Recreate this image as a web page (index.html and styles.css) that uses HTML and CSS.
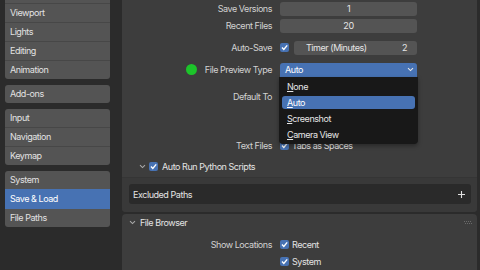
FILE: index.html
```html
<!DOCTYPE html>
<html lang="en">
<head>
    <meta charset="UTF-8">
    <title>Preferences - Save &amp; Load</title>
    <link rel="stylesheet" href="styles.css">
</head>
<body>
    <nav class="nav">
        <div class="group">
            <div class="nav-item">Interface</div>
            <div class="nav-item">Viewport</div>
            <div class="nav-item">Lights</div>
            <div class="nav-item">Editing</div>
            <div class="nav-item">Animation</div>
        </div>
        <div class="group">
            <div class="nav-item">Add-ons</div>
        </div>
        <div class="group">
            <div class="nav-item">Input</div>
            <div class="nav-item">Navigation</div>
            <div class="nav-item">Keymap</div>
        </div>
        <div class="group">
            <div class="nav-item">System</div>
            <div class="nav-item active">Save &amp; Load</div>
            <div class="nav-item">File Paths</div>
        </div>
    </nav>

    <main class="main">
        <section class="panel">
            <div class="row">
                <div class="label">Save Versions</div>
                <div class="ctrl"><div class="field">1</div></div>
            </div>
            <div class="row">
                <div class="label">Recent Files</div>
                <div class="ctrl"><div class="field">20</div></div>
            </div>
            <div class="row gap-m">
                <div class="label">Auto-Save</div>
                <div class="ctrl">
                    <span class="box"><svg viewBox="0 0 9 9"><path d="M2 4.6 L3.8 6.4 L7.2 2.4"/></svg></span>
                    <div class="field field-split"><span>Timer (Minutes)</span><span>2</span></div>
                </div>
            </div>
            <div class="row gap-m">
                <div class="label"><span class="dot"></span>File Preview Type</div>
                <div class="ctrl">
                    <div class="dropdown">
                        <span>Auto</span>
                        <svg class="chev" viewBox="0 0 7 5"><path d="M1 1.2 L3.5 3.6 L6 1.2"/></svg>
                        <div class="menu">
                            <div class="menu-item"><u>N</u>one</div>
                            <div class="menu-item selected"><u>A</u>uto</div>
                            <div class="menu-item"><u>S</u>creenshot</div>
                            <div class="menu-item"><u>C</u>amera View</div>
                        </div>
                    </div>
                </div>
            </div>
            <div class="row gap-l">
                <div class="label">Default To</div>
                <div class="ctrl">
                    <label class="check"><span class="box"><svg viewBox="0 0 9 9"><path d="M2 4.6 L3.8 6.4 L7.2 2.4"/></svg></span>Relative Paths</label>
                </div>
            </div>
            <div class="row">
                <div class="label"></div>
                <div class="ctrl">
                    <label class="check"><span class="box"><svg viewBox="0 0 9 9"><path d="M2 4.6 L3.8 6.4 L7.2 2.4"/></svg></span>Compress File</label>
                </div>
            </div>
            <div class="row gap-xl">
                <div class="label">Text Files</div>
                <div class="ctrl">
                    <label class="check"><span class="box"><svg viewBox="0 0 9 9"><path d="M2 4.6 L3.8 6.4 L7.2 2.4"/></svg></span>Tabs as Spaces</label>
                </div>
            </div>
            <div class="row row-toggle">
                <svg class="chev chev-dim" viewBox="0 0 7 5"><path d="M1 1.2 L3.5 3.6 L6 1.2"/></svg>
                <label class="check"><span class="box"><svg viewBox="0 0 9 9"><path d="M2 4.6 L3.8 6.4 L7.2 2.4"/></svg></span>Auto Run Python Scripts</label>
            </div>
            <div class="subpanel">
                <div class="subhead">
                    <span>Excluded Paths</span>
                    <svg class="plus" viewBox="0 0 7 7"><path d="M3.5 0 V7 M0 3.5 H7"/></svg>
                </div>
            </div>
        </section>

        <section class="panel panel-last">
            <div class="panel-head">
                <svg class="chev chev-dim" viewBox="0 0 7 5"><path d="M1 1.2 L3.5 3.6 L6 1.2"/></svg>
                <span class="panel-title">File Browser</span>
                <svg class="grip" viewBox="0 0 8 4"><path d="M0 0h1v1h-1z M2 0h1v1h-1z M4 0h1v1h-1z M6 0h1v1h-1z M1 2h1v1h-1z M3 2h1v1h-1z M5 2h1v1h-1z M7 2h1v1h-1z"/></svg>
            </div>
            <div class="row gap-s">
                <div class="label">Show Locations</div>
                <div class="ctrl">
                    <label class="check"><span class="box"><svg viewBox="0 0 9 9"><path d="M2 4.6 L3.8 6.4 L7.2 2.4"/></svg></span>Recent</label>
                </div>
            </div>
            <div class="row">
                <div class="label"></div>
                <div class="ctrl">
                    <label class="check"><span class="box"><svg viewBox="0 0 9 9"><path d="M2 4.6 L3.8 6.4 L7.2 2.4"/></svg></span>System</label>
                </div>
            </div>
        </section>
    </main>
</body>
</html>
```

FILE: styles.css
```css
body {
    margin: 0;
    width: 480px;
    height: 270px;
    overflow: hidden;
    display: flex;
    background: #2b2b2b;
    font-family: Inter, "Noto Sans", sans-serif;
    font-size: 9px;
    letter-spacing: -0.45px;
    color: #e4e4e4;
}

/* left navigation */
.nav {
    width: 105px;
    flex: none;
    padding: 0 12px 0 5px;
    margin-top: -15px;
    display: flex;
    flex-direction: column;
    gap: 6px;
}
.group {
    background: #545454;
    border-radius: 3px;
    overflow: hidden;
}
.nav-item {
    height: 18px;
    line-height: 18px;
    padding-left: 5px;
    border-top: 1px solid #474747;
    color: #e2e2e2;
}
.nav-item:first-child {
    border-top: none;
}
.nav-item.active {
    background: #4772b3;
    border-top-color: #4772b3;
    color: #fff;
}
.nav-item.active + .nav-item {
    border-top-color: #4772b3;
}

/* main area */
.main {
    flex: 1;
    min-width: 0;
    display: flex;
    flex-direction: column;
    gap: 2px;
    padding-right: 3px;
}
.panel {
    background: #3d3d3d;
    border-radius: 0 0 4px 4px;
}
.panel-last {
    flex: 1;
    border-radius: 4px 4px 0 0;
}

.row {
    display: flex;
    align-items: center;
    height: 17px;
}
.gap-s { margin-top: 5px; }
.gap-m { margin-top: 5px; }
.gap-l { margin-top: 10px; }
.gap-xl { margin-top: 15px; }

.label {
    width: 150px;
    flex: none;
    display: flex;
    align-items: center;
    justify-content: flex-end;
    color: #d2d2d2;
}
.ctrl {
    width: 137px;
    margin-left: 8px;
    display: flex;
    align-items: center;
    gap: 5px;
}

.field {
    flex: 1;
    height: 14px;
    line-height: 14px;
    background: #545454;
    border-radius: 3px;
    text-align: center;
    color: #e6e6e6;
}
.field-split {
    display: flex;
    justify-content: space-between;
    padding: 0 10px 0 12px;
}

.box {
    width: 9px;
    height: 9px;
    flex: none;
    background: #4772b3;
    border-radius: 2px;
    display: flex;
}
.box svg {
    width: 9px;
    height: 9px;
    fill: none;
    stroke: #fff;
    stroke-width: 1.4;
}
.check {
    display: flex;
    align-items: center;
    gap: 3px;
    color: #e4e4e4;
}

.dot {
    width: 11px;
    height: 11px;
    border-radius: 50%;
    background: #1cc42a;
    margin-right: 8px;
}

/* dropdown + open menu */
.dropdown {
    position: relative;
    flex: 1;
    height: 14px;
    display: flex;
    align-items: center;
    justify-content: space-between;
    padding: 0 3px 0 5px;
    background: #4772b3;
    border-radius: 3px 3px 0 0;
    color: #fff;
}
.chev {
    width: 7px;
    height: 5px;
    fill: none;
    stroke: #e8e8e8;
    stroke-width: 1.1;
}
.chev-dim {
    stroke: #a8a8a8;
}
.menu {
    position: absolute;
    top: 100%;
    left: -1px;
    width: 133px;
    padding: 3px 3px;
    display: flex;
    flex-direction: column;
    gap: 3px;
    background: #181818;
    border-radius: 0 0 4px 4px;
    box-shadow: 0 2px 4px rgba(0, 0, 0, 0.35);
    z-index: 2;
}
.menu-item {
    height: 13px;
    line-height: 13px;
    padding-left: 5px;
    border-radius: 3px;
    color: #e6e6e6;
}
.menu-item.selected {
    background: #4772b3;
    color: #fff;
}

.row-toggle {
    margin-top: 4px;
    padding-left: 17px;
    gap: 3px;
}
.row-toggle .check {
    gap: 4px;
}

.subpanel {
    margin-top: 2px;
    padding: 6px 6px 8px 7px;
    background: #393939;
    border-top: 1px solid #353535;
    border-radius: 0 0 4px 4px;
}
.subhead {
    height: 20px;
    display: flex;
    align-items: center;
    justify-content: space-between;
    padding: 0 6px 0 4px;
    background: #2a2a2a;
    border-radius: 3px;
    color: #e4e4e4;
}
.plus {
    width: 7px;
    height: 7px;
    fill: none;
    stroke: #e0e0e0;
    stroke-width: 1.1;
}

.panel-head {
    height: 17px;
    display: flex;
    align-items: center;
    gap: 4px;
    padding: 0 5px 0 7px;
}
.panel-title {
    flex: 1;
}
.grip {
    width: 8px;
    height: 4px;
    fill: #6a6a6a;
}
```
